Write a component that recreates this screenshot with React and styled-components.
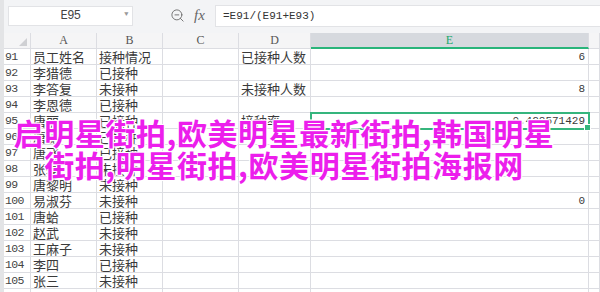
import React from 'react';
import styled, { createGlobalStyle } from 'styled-components';
import { ZoomOut } from 'lucide-react';

const GlobalStyle = createGlobalStyle`
  html, body {
    margin: 0;
    padding: 0;
    background: #fff;
    overflow: hidden;
  }
`;

const Page = styled.div`
  position: relative;
  width: 600px;
  height: 292px;
  overflow: hidden;
  border-left: 4px solid #e3e4e6;
  box-sizing: border-box;
  font-family: "Noto Sans CJK SC", sans-serif;
`;

const FormulaBar = styled.div`
  display: flex;
  align-items: center;
  height: 33px;
  padding: 0 0 2px 4px;
  box-sizing: border-box;
  background: #f3f4f6;
`;

const NameBox = styled.div`
  position: relative;
  display: flex;
  align-items: center;
  justify-content: center;
  width: 125px;
  height: 20px;
  background: #fff;
  border: 1px solid #e2e3e6;
  box-sizing: border-box;
  font-family: "Liberation Mono", monospace;
  font-size: 12px;
  color: #444;
  letter-spacing: -0.5px;
`;

const Caret = styled.span`
  position: absolute;
  right: 4px;
  top: 3px;
  font-size: 7px;
  color: #999;
`;

const Tools = styled.div`
  display: flex;
  align-items: center;
  gap: 9px;
  width: 82px;
  padding-left: 37px;
  box-sizing: border-box;
  color: #666;
`;

const Fx = styled.span`
  font-family: "Liberation Serif", serif;
  font-style: italic;
  font-size: 15px;
  color: #666;
`;

const FormulaInput = styled.div`
  flex: 1;
  height: 20px;
  display: flex;
  align-items: center;
  padding-left: 7px;
  background: #fff;
  border: 1px solid #e2e3e6;
  border-right: none;
  font-family: "Liberation Mono", monospace;
  font-size: 11px;
  color: #333;
`;

const Sheet = styled.div`
  display: grid;
  grid-template-columns: 27px 66px 66px 76px 72px 278px 1fr;
  grid-auto-rows: 16px;
`;

const Head = styled.div`
  display: flex;
  align-items: center;
  justify-content: center;
  background: ${p => (p.$active ? '#d6d9de' : '#f5f5f6')};
  border-right: 1px solid #dcdde2;
  border-bottom: ${p => (p.$active ? '2px solid #29b47a' : '1px solid #dcdde2')};
  box-sizing: border-box;
  font-family: "Liberation Serif", serif;
  font-size: 12px;
  color: ${p => (p.$active ? '#22a86e' : '#555')};
`;

const Corner = styled(Head)`
  position: relative;
  &::after {
    content: '';
    position: absolute;
    right: 3px;
    bottom: 2px;
    border-left: 8px solid transparent;
    border-bottom: 8px solid #cfd0d3;
  }
`;

const RowNum = styled.div`
  display: flex;
  align-items: center;
  padding-left: 1px;
  border-right: 1px solid #dcdde2;
  border-bottom: 1px solid #dcdde2;
  box-sizing: border-box;
  font-family: "Liberation Mono", monospace;
  font-size: 11.5px;
  letter-spacing: -0.6px;
  color: #444;
`;

const Cell = styled.div`
  position: relative;
  display: flex;
  align-items: center;
  justify-content: ${p => (p.$num ? 'flex-end' : 'flex-start')};
  padding: 0 ${p => (p.$num ? '3px' : '0')} 0 ${p => (p.$num ? '0' : '2px')};
  border-right: 1px solid #dcdde2;
  border-bottom: 1px solid #dcdde2;
  box-sizing: border-box;
  white-space: nowrap;
  overflow: visible;
  font-family: ${p => (p.$num ? '"Liberation Mono", monospace' : '"Noto Sans CJK SC", sans-serif')};
  font-size: ${p => (p.$num ? '11px' : '13px')};
  color: #3a3a3a;
  ${p => p.$selected && `
    outline: 2px solid #35b57d;
    outline-offset: -1px;
    z-index: 1;
    &::after {
      content: '';
      position: absolute;
      right: -3px;
      bottom: -3px;
      width: 5px;
      height: 5px;
      background: #35b57d;
      border: 1px solid #fff;
    }
  `}
`;

const Overlay = styled.div`
  position: absolute;
  left: 0;
  top: 116px;
  width: 560px;
  text-align: center;
  font-family: "Noto Sans CJK SC", sans-serif;
  font-weight: 700;
  font-size: 30px;
  line-height: 32px;
  color: #ec1eec;
  text-shadow: 0 0 2px #fff, 1px 1px 0 #fff, -1px -1px 0 #fff, 1px -1px 0 #fff, -1px 1px 0 #fff;
  pointer-events: none;
  z-index: 3;
`;

const Line = styled.div`
  white-space: nowrap;
  letter-spacing: ${p => p.$spacing || '0.6px'};
`;

const columns = ['A', 'B', 'C', 'D', 'E', ''];

const rows = [
  [91, '员工姓名', '接种情况', '', '已接种人数', '6'],
  [92, '李猎德', '已接种', '', '', ''],
  [93, '李答复', '未接种', '', '未接种人数', '8'],
  [94, '李恩德', '已接种', '', '', ''],
  [95, '唐丽', '已接种', '', '接种率', '0.428571429'],
  [96, '唐聪', '已接种', '', '', ''],
  [97, '唐飞', '已接种', '', '', ''],
  [98, '张磊', '未接种', '', '', ''],
  [99, '唐黎明', '未接种', '', '', ''],
  [100, '易淑芬', '未接种', '', '', '0'],
  [101, '唐蛤', '已接种', '', '', ''],
  [102, '赵武', '未接种', '', '', ''],
  [103, '王麻子', '未接种', '', '', ''],
  [104, '李四', '已接种', '', '', ''],
  [105, '张三', '未接种', '', '', ''],
];

export default function App() {
  return (
    <Page>
      <GlobalStyle />
      <FormulaBar>
        <NameBox>
          E95
          <Caret>▼</Caret>
        </NameBox>
        <Tools>
          <ZoomOut size={15} strokeWidth={1.4} />
          <Fx>fx</Fx>
        </Tools>
        <FormulaInput>=E91/(E91+E93)</FormulaInput>
      </FormulaBar>
      <Sheet>
        <Corner />
        {columns.map((c, i) => (
          <Head key={i} $active={c === 'E'}>{c}</Head>
        ))}
        {rows.map(([n, a, b, c, d, e]) => (
          <React.Fragment key={n}>
            <RowNum>{n}</RowNum>
            <Cell>{a}</Cell>
            <Cell>{b}</Cell>
            <Cell>{c}</Cell>
            <Cell>{d}</Cell>
            <Cell $num $selected={n === 95}>{e}</Cell>
            <Cell />
          </React.Fragment>
        ))}
        {/* partial next row at the bottom edge */}
        <RowNum />
        <Cell />
        <Cell />
        <Cell />
        <Cell />
        <Cell $num />
        <Cell />
      </Sheet>
      <Overlay>
        <Line>启明星街拍,欧美明星最新街拍,韩国明星</Line>
        <Line>街拍,明星街拍,欧美明星街拍海报网</Line>
      </Overlay>
    </Page>
  );
}
